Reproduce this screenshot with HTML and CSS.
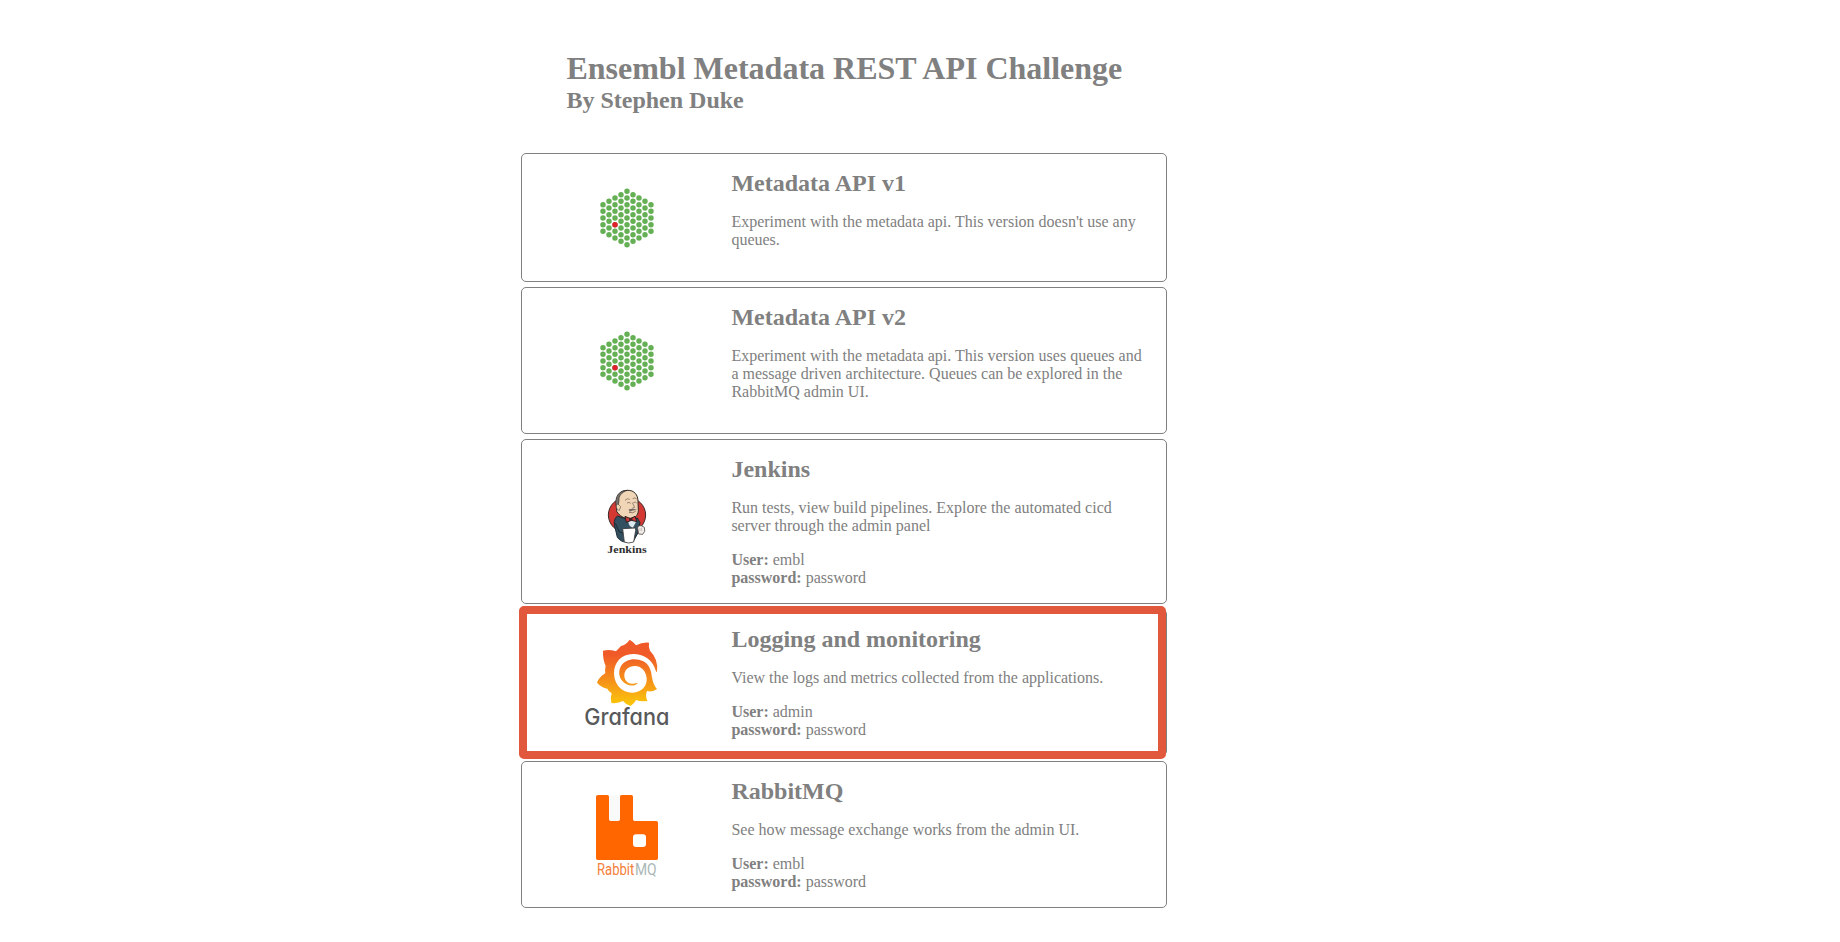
FILE: index.html
```html
<!DOCTYPE html>
<html lang="en">
<head>
<meta charset="utf-8">
<title>Ensembl Metadata REST API Challenge</title>
<link rel="stylesheet" href="styles.css">
</head>
<body>
<svg class="defs" width="0" height="0" aria-hidden="true">
  <symbol id="hive" viewBox="0 0 219 225">
    <g class="dots">
      <path d="M39 74V155M57 64V165M75 54V175M93 44V185M111 34V195M129 44V185M147 54V175M165 64V165M183 74V155"/>
    </g>
    <circle cx="75" cy="134" r="8.2" fill="#e0202c"/>
  </symbol>
</svg>
<main class="page">
  <header class="heading">
    <h1>Ensembl Metadata REST API Challenge</h1>
    <h2>By Stephen Duke</h2>
  </header>
  <section class="cards">
    <article class="card">
      <div class="logo"><svg width="73" height="75"><use href="#hive"/></svg></div>
      <div class="info">
        <h2>Metadata API v1</h2>
        <p>Experiment with the metadata api. This version doesn't use any queues.</p>
        <p></p>
      </div>
    </article>
    <article class="card">
      <div class="logo"><svg width="73" height="75"><use href="#hive"/></svg></div>
      <div class="info">
        <h2>Metadata API v2</h2>
        <p>Experiment with the metadata api. This version uses queues and a message driven architecture. Queues can be explored in the RabbitMQ admin UI.</p>
        <p></p>
      </div>
    </article>
    <article class="card">
      <div class="logo">
        <svg width="73" height="83" viewBox="0 0 219 249">
          <ellipse cx="111" cy="105" rx="56" ry="53" fill="#d33833" stroke="#3a2a2a" stroke-width="3"/>
          <path d="M82 108C72 116 70 132 76 146L82 172C90 182 98 186 108 186L130 184L142 162L150 128L142 114L118 120Z" fill="#335061" stroke="#1c2b33" stroke-width="3"/>
          <path d="M76 130L88 156L102 160" fill="none" stroke="#1c2b33" stroke-width="3"/>
          <path d="M110 116L118 138L129 145L140 124L135 114Z" fill="#dce9f0" stroke="#41535e" stroke-width="2"/>
          <path d="M80 78C76 50 88 31 112 31C133 30 144 45 144 64L145 92C144 108 132 116 120 117C103 116 88 108 80 94Z" fill="#f0d6b7" stroke="#2e2926" stroke-width="3"/>
          <path d="M78 78C74 48 88 31 112 31C94 37 86 48 87 61L85 76L83 86Z" fill="#77736f" stroke="#2e2926" stroke-width="2"/>
          <path d="M84 72C76 74 78 90 88 91L92 80Z" fill="#f0d6b7" stroke="#2e2926" stroke-width="1.5"/>
          <path d="M105 61Q112 53 119 58M128 56Q135 51 140 57M111 69Q117 65 122 70M130 68Q136 64 140 69M127 68L134 82L126 85" fill="none" stroke="#6b594f" stroke-width="2"/>
          <path d="M116 88Q130 83 141 90Q128 91 119 95Z" fill="#746b64"/>
          <path d="M117 97Q128 101 137 94" fill="none" stroke="#68483e" stroke-width="2"/>
          <path d="M105 109L121 116L135 109L141 125L124 121L109 127Z" fill="#d33833" stroke="#291e23" stroke-width="3"/>
          <path d="M117 113L127 113L128 122L118 123Z" fill="#451f25"/>
          <path d="M98 146L136 144L137 151L131 186Q114 192 103 186Z" fill="#fff" stroke="#38383a" stroke-width="2.5"/>
          <path d="M143 145Q142 136 154 137L163 142Q168 155 158 163L146 162Z" fill="#f3eee9" stroke="#514a48" stroke-width="2.5"/>
          <path d="M150 144V153M155 143V154" stroke="#999" stroke-width="1.5"/>
          <text class="jenkins-name" x="52" y="218" textLength="118" lengthAdjust="spacingAndGlyphs">Jenkins</text>
        </svg>
      </div>
      <div class="info">
        <h2>Jenkins</h2>
        <p>Run tests, view build pipelines. Explore the automated cicd server through the admin panel</p>
        <p><b>User:</b> embl<br><b>password:</b> password</p>
      </div>
    </article>
    <article class="card selected">
      <div class="logo">
        <svg width="103" height="105" viewBox="0 0 309 315">
          <defs>
            <linearGradient id="sun" gradientUnits="userSpaceOnUse" x1="0" y1="75" x2="0" y2="230">
              <stop offset="0" stop-color="#f05a28"/>
              <stop offset="1" stop-color="#fbca0a"/>
            </linearGradient>
          </defs>
          <path fill="url(#sun)" d="M164 29Q175 35 183 46Q202 36 222 38Q220 52 225 62Q251 88 246 125C243 126 242 124 241 120L231 141Q234 164 246 177Q234 187 216 183Q210 196 217 213Q197 216 183 210Q178 221 167 228Q152 224 144 213Q130 221 109 219Q105 205 110 190Q101 185 97 176Q78 172 66 158Q72 141 91 130Q89 119 92 108Q83 88 84 62Q103 57 123 64L138 48Q153 45 164 29Z"/>
          <path fill="#fff" d="M243 125C235 92 210 72 174 72C139 72 117 98 117 129C117 164 142 189 173 188C200 187 217 168 215 145C213 122 198 108 180 108C160 108 147 121 148 138C149 153 161 163 174 161C181 161 184 159 188 159C181 168 166 169 155 163C133 152 127 128 138 108C151 87 181 82 205 94C222 103 229 120 231 144Z"/>
          <text class="grafana-name" x="28" y="285" textLength="255" lengthAdjust="spacingAndGlyphs">Grafana</text>
        </svg>
      </div>
      <div class="info">
        <h2>Logging and monitoring</h2>
        <p>View the logs and metrics collected from the applications.</p>
        <p><b>User:</b> admin<br><b>password:</b> password</p>
      </div>
    </article>
    <article class="card">
      <div class="logo">
        <svg width="83" height="99" viewBox="0 0 249 297">
          <path d="M70 31H108V108H70Z" fill="#f9f9f9"/>
          <path fill="#f60" fill-rule="evenodd" d="M39 30H67Q72 30 72 35V103Q72 108 77 108H100Q105 108 105 103V35Q105 30 110 30H139Q144 30 144 35V103Q144 108 149 108H214Q219 108 219 113V220Q219 225 214 225H38Q33 225 33 220V35Q33 30 39 30ZM153 148Q144 148 144 157V177Q144 186 153 186H174Q183 186 183 177V157Q183 148 174 148Z"/>
          <text class="rabbit-name" x="36" y="270" textLength="112" lengthAdjust="spacingAndGlyphs" fill="#f5803a">Rabbit</text>
          <text class="rabbit-name" x="150" y="270" textLength="65" lengthAdjust="spacingAndGlyphs" fill="#aab8b6">MQ</text>
        </svg>
      </div>
      <div class="info">
        <h2>RabbitMQ</h2>
        <p>See how message exchange works from the admin UI.</p>
        <p><b>User:</b> embl<br><b>password:</b> password</p>
      </div>
    </article>
  </section>
</main>
</body>
</html>
```
FILE: styles.css
```css
body {
  margin: 0;
  background: #fff;
  color: #808080;
  font: 16px/18px "Liberation Serif", "Times New Roman", serif;
}

.defs { display: block; }

.page {
  width: 646px;
  margin-left: 521.4px;
  padding-top: 50px;
}

.heading {
  padding: 0 0 39px 45px;
}

.heading h1 {
  margin: 0;
  font-size: 32px;
  line-height: 37px;
  white-space: nowrap;
}

h2 {
  margin: 0;
  font-size: 24px;
  line-height: 27px;
}

.cards {
  display: flex;
  flex-direction: column;
  gap: 5px;
}

.card {
  position: relative;
  display: grid;
  grid-template-columns: 209px 1fr;
  border: 1px solid #808080;
  border-radius: 5px;
}

.logo {
  display: flex;
  align-items: center;
  justify-content: center;
}

.logo svg { display: block; }

.info {
  display: flow-root;
  padding: 16px 20px 0 0;
}

.info p { margin: 16px 0; }

.info p:empty { margin: 0; height: 16px; }

/* Highlight frame drawn over the card's own border */
.selected::after {
  content: "";
  position: absolute;
  inset: -4px 0 -4px -3px;
  border: 8px solid #e2583c;
  border-radius: 5px;
}

.dots path {
  fill: none;
  stroke: #65b054;
  stroke-width: 16.4;
  stroke-linecap: round;
  stroke-dasharray: 0 20;
}

.jenkins-name {
  font: bold 29px "Liberation Serif", serif;
  fill: #303030;
}

.grafana-name {
  font: 500 69px Inter, sans-serif;
  font-feature-settings: "cv11" 1;
  fill: #58595b;
}

.rabbit-name {
  font: 400 50px Roboto, sans-serif;
}
```
